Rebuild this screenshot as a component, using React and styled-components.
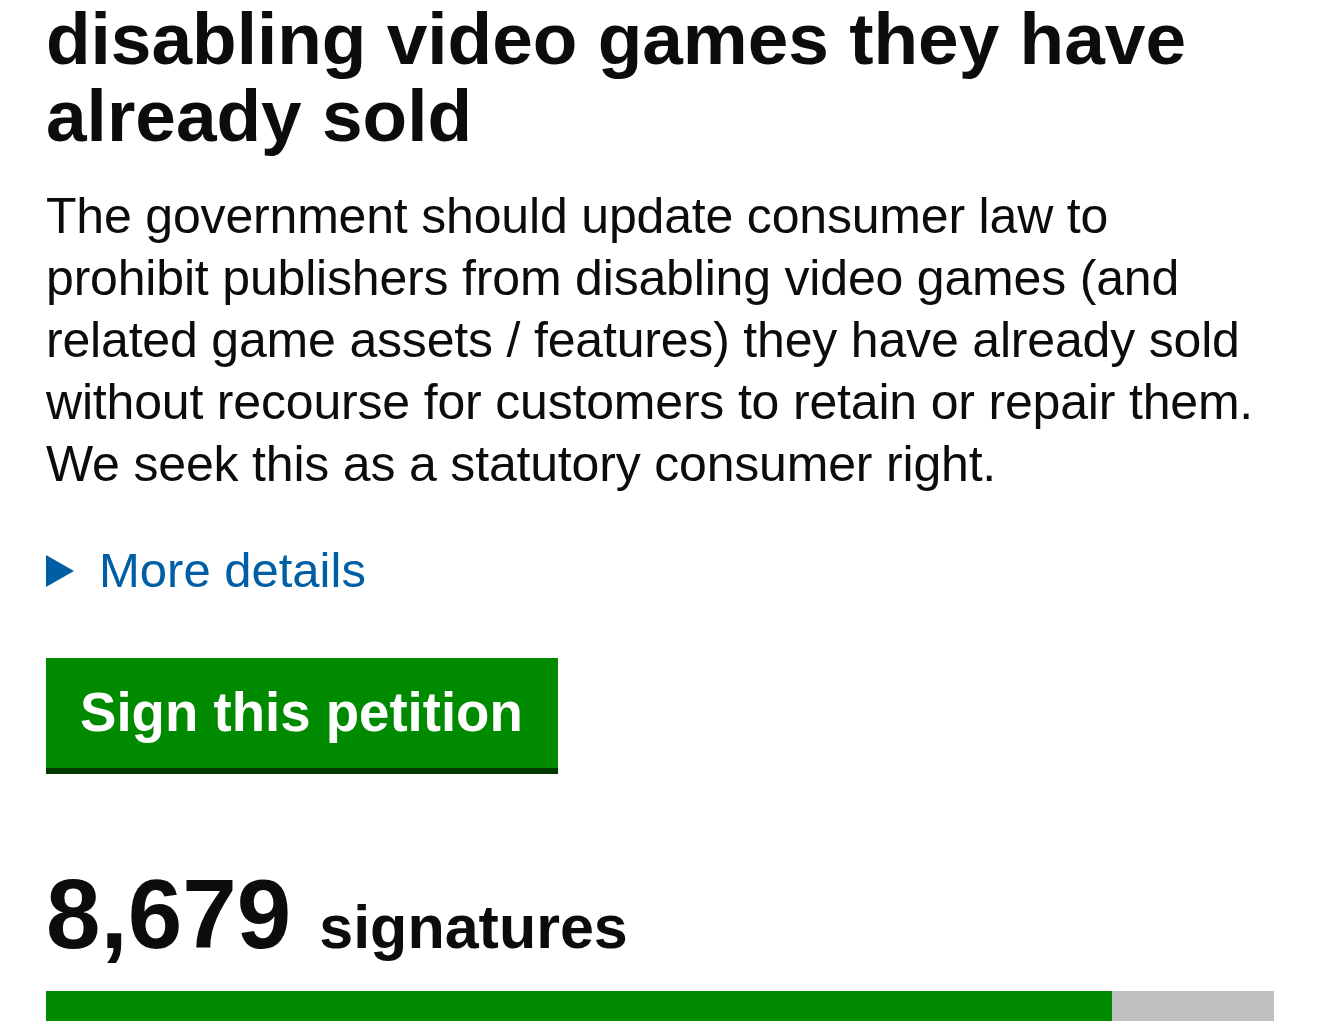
import React from "react";
import styled, { createGlobalStyle } from "styled-components";

const GlobalStyle = createGlobalStyle`
  html, body {
    margin: 0;
    padding: 0;
    background: #ffffff;
  }
  body {
    font-family: "Liberation Sans", Helvetica, Arial, sans-serif;
    color: #0b0c0c;
    overflow: hidden;
  }
`;

const petition = {
  title: "disabling video games they have already sold",
  summary:
    "The government should update consumer law to prohibit publishers from disabling video games (and related game assets / features) they have already sold without recourse for customers to retain or repair them. We seek this as a statutory consumer right.",
  signatures: 8679,
  goal: 10000,
};

const App = () => {
  const percent = Math.min(100, (petition.signatures / petition.goal) * 100);

  return (
    <>
      <GlobalStyle />
      <Page>
        <Title>{petition.title}</Title>
        <Summary>{petition.summary}</Summary>

        <Details>
          <Arrow />
          <DetailsLink href="#details">More details</DetailsLink>
        </Details>

        <SignButton type="button">Sign this petition</SignButton>

        <Count>
          <CountNumber>{petition.signatures.toLocaleString("en-GB")}</CountNumber>
          <CountLabel>signatures</CountLabel>
        </Count>

        <Progress>
          <ProgressFill style={{ width: `${percent}%` }} />
        </Progress>
      </Page>
    </>
  );
};

const Page = styled.main`
  display: flex;
  flex-direction: column;
  align-items: flex-start;
  padding: 0 46px;
`;

const Title = styled.h1`
  margin: 0;
  font-size: 73px;
  line-height: 77px;
  font-weight: 700;
`;

const Summary = styled.p`
  margin: 31px 0 0;
  font-size: 50px;
  line-height: 62px;
  font-weight: 400;
  letter-spacing: -0.18px;
`;

const Details = styled.div`
  display: flex;
  align-items: center;
  gap: 25px;
  margin-top: 45px;
`;

const Arrow = styled.span`
  width: 0;
  height: 0;
  border-top: 16px solid transparent;
  border-bottom: 16px solid transparent;
  border-left: 28px solid #005ea5;
`;

const DetailsLink = styled.a`
  font-size: 49px;
  line-height: 61px;
  color: #005ea5;
  text-decoration: none;
`;

const SignButton = styled.button`
  margin-top: 57px;
  padding: 22px 35px 23px 34px;
  border: 0;
  border-radius: 0;
  background: #008a00;
  box-shadow: 0 6px 0 #003a00;
  color: #ffffff;
  font-family: inherit;
  font-size: 54.6px;
  line-height: 65px;
  font-weight: 700;
  cursor: pointer;
`;

const Count = styled.div`
  display: flex;
  align-items: baseline;
  gap: 28px;
  margin-top: 98px;
  font-weight: 700;
`;

const CountNumber = styled.span`
  font-size: 98px;
  line-height: 97px;
`;

const CountLabel = styled.span`
  font-size: 61px;
  line-height: 60px;
`;

const Progress = styled.div`
  align-self: stretch;
  height: 30px;
  margin-top: 28px;
  background: #bfc1c3;
`;

const ProgressFill = styled.div`
  height: 100%;
  background: #008a00;
`;

export default App;
